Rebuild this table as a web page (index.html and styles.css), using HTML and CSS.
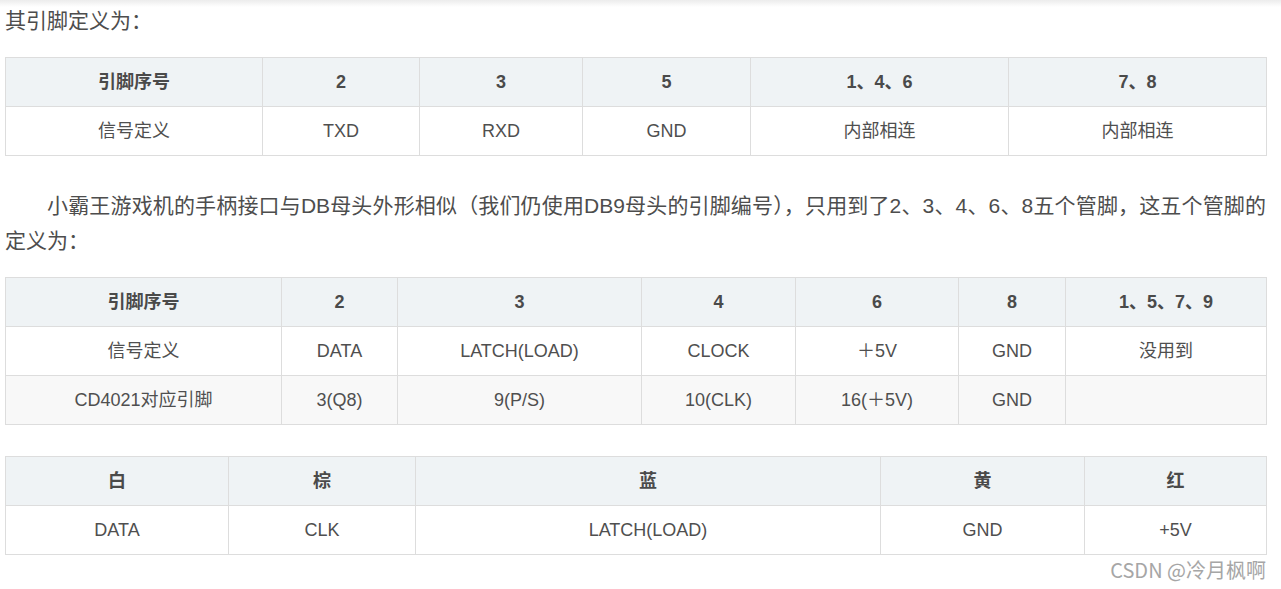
FILE: index.html
```html
<!DOCTYPE html>
<html lang="zh-CN">
<head>
<meta charset="utf-8">
<title>引脚定义</title>
<link rel="stylesheet" href="styles.css">
</head>
<body>
<div class="top-shadow"></div>
<article class="article">
  <p class="para">其引脚定义为：</p>
  <table class="grid">
    <colgroup>
      <col class="c257"><col class="c157"><col class="c163"><col class="c168"><col class="c258"><col class="c258">
    </colgroup>
    <thead>
      <tr><th>引脚序号</th><th>2</th><th>3</th><th>5</th><th>1、4、6</th><th>7、8</th></tr>
    </thead>
    <tbody>
      <tr><td>信号定义</td><td>TXD</td><td>RXD</td><td>GND</td><td>内部相连</td><td>内部相连</td></tr>
    </tbody>
  </table>
  <p class="para indent">小霸王游戏机的手柄接口与DB母头外形相似（我们仍使用DB9母头的引脚编号），只用到了2、3、4、6、8五个管脚，这五个管脚的定义为：</p>
  <table class="grid tight">
    <colgroup>
      <col class="c276"><col class="c116"><col class="c244"><col class="c154"><col class="c163"><col class="c107"><col class="c201">
    </colgroup>
    <thead>
      <tr><th>引脚序号</th><th>2</th><th>3</th><th>4</th><th>6</th><th>8</th><th>1、5、7、9</th></tr>
    </thead>
    <tbody>
      <tr><td>信号定义</td><td>DATA</td><td>LATCH(LOAD)</td><td>CLOCK</td><td>＋5V</td><td>GND</td><td>没用到</td></tr>
      <tr class="alt"><td>CD4021对应引脚</td><td>3(Q8)</td><td>9(P/S)</td><td>10(CLK)</td><td>16(＋5V)</td><td>GND</td><td></td></tr>
    </tbody>
  </table>
  <table class="grid last">
    <colgroup>
      <col class="c223"><col class="c187"><col class="c465"><col class="c204"><col class="c182">
    </colgroup>
    <thead>
      <tr><th>白</th><th>棕</th><th>蓝</th><th>黄</th><th>红</th></tr>
    </thead>
    <tbody>
      <tr><td>DATA</td><td>CLK</td><td>LATCH(LOAD)</td><td>GND</td><td>+5V</td></tr>
    </tbody>
  </table>
  <div class="watermark">CSDN @冷月枫啊</div>
</article>
</body>
</html>
```

FILE: styles.css
```css
html, body {
  margin: 0;
  padding: 0;
  background: #ffffff;
}

body {
  position: relative;
  font-family: "Liberation Sans", "Noto Sans CJK SC", sans-serif;
  color: #4d4d4d;
}

.top-shadow {
  position: absolute;
  left: 0;
  top: 0;
  width: 100%;
  height: 7px;
  background: linear-gradient(to bottom, #ececec, rgba(255, 255, 255, 0));
  pointer-events: none;
}

.article {
  width: 1261px;
  padding: 3px 0 0 5px;
}

.para {
  margin: 0 0 19px;
  font-size: 21px;
  line-height: 35px;
  color: #4d4d4d;
  text-align: justify;
}

.indent {
  text-indent: 2em;
}

.grid {
  width: 1261px;
  table-layout: fixed;
  border-collapse: collapse;
  margin: 0 0 32px;
  font-size: 18px;
  color: #4f4f4f;
}

.grid.tight {
  margin-bottom: 31px;
}

.grid.last {
  margin-bottom: 0;
}

.grid th,
.grid td {
  border: 1px solid #dddddd;
  padding: 12px 8px;
  line-height: 24px;
  text-align: center;
  white-space: nowrap;
}

.grid th {
  background: #eff3f5;
  font-weight: bold;
  color: #4a4a4a;
}

.grid .alt td {
  background: #f8f8f8;
}

.watermark {
  margin-top: 3px;
  text-align: right;
  font-family: "Noto Sans CJK SC", sans-serif;
  font-size: 20px;
  line-height: 24px;
  color: #a6a6a6;
}

.c257 { width: 257px; }
.c157 { width: 157px; }
.c163 { width: 163px; }
.c168 { width: 168px; }
.c258 { width: 258px; }
.c276 { width: 276px; }
.c116 { width: 116px; }
.c244 { width: 244px; }
.c154 { width: 154px; }
.c107 { width: 107px; }
.c201 { width: 201px; }
.c223 { width: 223px; }
.c187 { width: 187px; }
.c465 { width: 465px; }
.c204 { width: 204px; }
.c182 { width: 182px; }
```
